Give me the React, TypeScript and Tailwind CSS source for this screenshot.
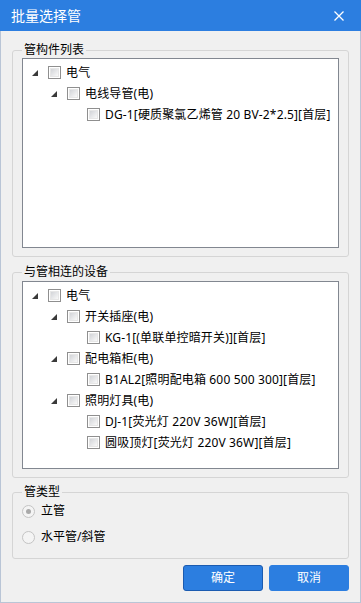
import React from "react";

type Node = { level: 0 | 1 | 2; label: string; expander?: boolean };

const pipeTree: Node[] = [
  { level: 0, label: "电气", expander: true },
  { level: 1, label: "电线导管(电)", expander: true },
  { level: 2, label: "DG-1[硬质聚氯乙烯管 20 BV-2*2.5][首层]" },
];

const deviceTree: Node[] = [
  { level: 0, label: "电气", expander: true },
  { level: 1, label: "开关插座(电)", expander: true },
  { level: 2, label: "KG-1[(单联单控暗开关)][首层]" },
  { level: 1, label: "配电箱柜(电)", expander: true },
  { level: 2, label: "B1AL2[照明配电箱 600 500 300][首层]" },
  { level: 1, label: "照明灯具(电)", expander: true },
  { level: 2, label: "DJ-1[荧光灯 220V 36W][首层]" },
  { level: 2, label: "圆吸顶灯[荧光灯 220V 36W][首层]" },
];

const indent = {
  0: "pl-[9px]",
  1: "pl-[28px]",
  2: "pl-[48px]",
};

function Checkbox() {
  return (
    <span className="flex h-[13px] w-[13px] shrink-0 items-center justify-center border border-[#8f8f8f] bg-white">
      <span className="h-[9px] w-[9px] border border-[#e6e6e6] bg-gradient-to-br from-[#d2d4d8] to-[#f9f9f9]" />
    </span>
  );
}

function TreeRow({ node }: { node: Node }) {
  return (
    <div className={`flex h-[21px] items-center ${indent[node.level]}`}>
      <span className="flex w-[16px] shrink-0 items-center">
        {node.expander && (
          <svg width="6" height="6" viewBox="0 0 6 6" className="mt-[1px]">
            <polygon points="6,0 6,6 0,6" fill="#3a3a3a" />
          </svg>
        )}
      </span>
      <Checkbox />
      <span className="ml-[5px] whitespace-nowrap text-[12px] leading-[21px] tracking-[0.15px] text-black">
        {node.label}
      </span>
    </div>
  );
}

function Tree({ nodes, height }: { nodes: Node[]; height: string }) {
  return (
    <div className={`${height} border border-[#828790] bg-white pt-[3px]`}>
      {nodes.map((n, i) => (
        <TreeRow key={i} node={n} />
      ))}
    </div>
  );
}

function Radio({ checked, label }: { checked?: boolean; label: string }) {
  return (
    <div className="flex h-[20px] items-center">
      <span className="flex h-[13px] w-[13px] items-center justify-center rounded-full border border-[#c4c4c4] bg-[#f4f4f4]">
        {checked && <span className="h-[5px] w-[5px] rounded-full bg-[#a9a9a9]" />}
      </span>
      <span className="ml-[6px] text-[12px] leading-[20px] text-black">{label}</span>
    </div>
  );
}

export default function App() {
  return (
    <div
      className="flex h-[603px] w-[361px] flex-col bg-[#f0f0f0]"
      style={{ fontFamily: '"Noto Sans", "Noto Sans CJK SC", sans-serif' }}
    >
      {/* Title bar */}
      <div className="flex h-[31px] shrink-0 items-center justify-between bg-[#2c7ee0] pl-[11px] pr-[17px]">
        <span className="text-[14px] leading-[31px] text-white">批量选择管</span>
        <svg width="10" height="10" viewBox="0 0 10 10">
          <path d="M0.5 0.5 L9.5 9.5 M9.5 0.5 L0.5 9.5" stroke="#ffffff" strokeWidth="1.3" />
        </svg>
      </div>

      {/* Body */}
      <div className="flex flex-1 flex-col border-x border-b border-[#b9c5d6] px-[11px]">
        <fieldset className="mt-[12px] rounded-[3px] border border-[#d5d5d5] px-[9px] pb-[8px]">
          <legend className="px-[2px] text-[12px] leading-[14px] text-black">管构件列表</legend>
          <div className="mt-[1px]">
            <Tree nodes={pipeTree} height="h-[190px]" />
          </div>
        </fieldset>

        <fieldset className="mt-[8px] rounded-[3px] border border-[#d5d5d5] px-[9px] pb-[8px]">
          <legend className="px-[2px] text-[12px] leading-[14px] text-black">与管相连的设备</legend>
          <div className="mt-[2px]">
            <Tree nodes={deviceTree} height="h-[188px]" />
          </div>
        </fieldset>

        <fieldset className="mt-[7px] rounded-[3px] border border-[#d5d5d5] px-[9px] pb-[11px]">
          <legend className="px-[2px] text-[12px] leading-[14px] text-black">管类型</legend>
          <div className="mt-[2px] flex flex-col gap-[6px]">
            <Radio checked label="立管" />
            <Radio label="水平管/斜管" />
          </div>
        </fieldset>

        <div className="mt-[6px] flex justify-end gap-[6px]">
          <button className="h-[26px] w-[80px] rounded-[3px] border border-[#1b5bb0] bg-[#2c7ee0] text-[12px] text-white">
            确定
          </button>
          <button className="h-[26px] w-[80px] rounded-[3px] border border-[#2c7ee0] bg-[#2c7ee0] text-[12px] text-white">
            取消
          </button>
        </div>
      </div>
    </div>
  );
}
